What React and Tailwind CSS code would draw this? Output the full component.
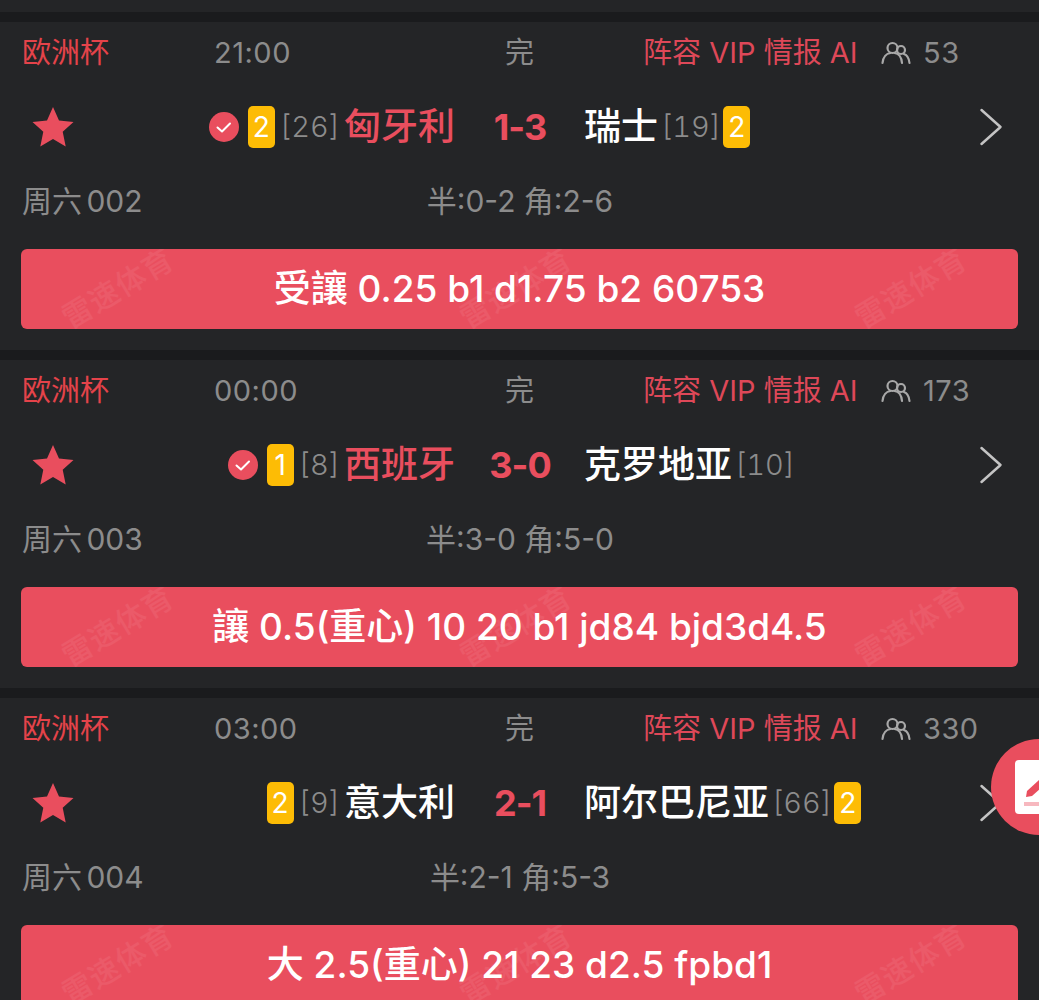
const matches = [
  {
    time: "21:00",
    count: 53,
    code: "周六 002",
    stats: "半:0-2 角:2-6",
    home: "匈牙利",
    homeRank: "[26]",
    homeCards: 2,
    away: "瑞士",
    awayRank: "[19]",
    awayCards: 2,
    score: "1-3",
    checked: true,
    homeRed: true,
    tip: "受讓 0.25 b1 d1.75 b2 60753",
  },
  {
    time: "00:00",
    count: 173,
    code: "周六 003",
    stats: "半:3-0 角:5-0",
    home: "西班牙",
    homeRank: "[8]",
    homeCards: 1,
    away: "克罗地亚",
    awayRank: "[10]",
    score: "3-0",
    checked: true,
    homeRed: true,
    tip: "讓 0.5(重心) 10 20 b1 jd84 bjd3d4.5",
  },
  {
    time: "03:00",
    count: 330,
    code: "周六 004",
    stats: "半:2-1 角:5-3",
    home: "意大利",
    homeRank: "[9]",
    homeCards: 2,
    away: "阿尔巴尼亚",
    awayRank: "[66]",
    awayCards: 2,
    score: "2-1",
    tip: "大 2.5(重心) 21 23 d2.5 fpbd1",
  },
];

function Users() {
  return (
    <svg width="30" height="24" viewBox="0 0 30 24" fill="none" stroke="#a8a8a8" strokeWidth="2.200" strokeLinecap="round">
      <circle cx="11.500" cy="7" r="5" />
      <path d="M1.500 22c.5-6 4-9.500 8-10M13.500 12c4 .5 7 4 7.500 10" />
      <circle cx="20" cy="9" r="4" />
      <path d="M23 13c3 1 5 4.500 5.500 9" />
    </svg>
  );
}

function Star() {
  return (
    <svg width="42" height="40" viewBox="0 0 42 40" fill="#e94e5e">
      <path d="M21 0l6 13.500 14.500 1.500-10.800 9.700 3 14.800L21 32l-12.700 7.500 3-14.800L.5 15 15 13.500z" />
    </svg>
  );
}

function Check() {
  return (
    <svg width="30" height="30" viewBox="0 0 30 30" className="mr-[9px] shrink-0">
      <circle cx="15" cy="15" r="15" fill="#e94e5e" />
      <path d="M8.500 15.500l4.500 4 8-8" fill="none" stroke="#fff" strokeWidth="2" strokeLinecap="round" strokeLinejoin="round" />
    </svg>
  );
}

function Chevron() {
  return (
    <svg width="24" height="38" viewBox="0 0 24 38" fill="none" stroke="#c4c4c4" strokeWidth="2.500" strokeLinecap="round" strokeLinejoin="round">
      <path d="M2.500 2L21.500 19 2.500 36" />
    </svg>
  );
}

function CardBadge({ n }) {
  return (
    <span className="flex h-[42px] w-[27px] shrink-0 items-center justify-center rounded-[5px] bg-[#fdbc05] text-[28px] text-white">
      {n}
    </span>
  );
}

function Watermark({ className }) {
  return (
    <span className={`pointer-events-none absolute -rotate-[31deg] whitespace-nowrap text-[30px] tracking-[1px] text-white/[0.07] ${className}`}>
      雷速体育
    </span>
  );
}

function MatchCard({ m }) {
  return (
    <div className="mb-[10px] bg-[#242527] px-[21px] pb-[21px]">
      {/* top line */}
      <div className="flex h-[60px] items-center pl-px pt-px text-[29px]">
        <span className="w-[192px] text-[#e5434a]">欧洲杯</span>
        <span className="w-[291px] tracking-[0.5px] text-[#8c8c8c]">{m.time}</span>
        <span className="w-[138px] text-[#8c8c8c]">完</span>
        <span className="w-[238px] text-[#de4858]">阵容 VIP 情报 AI</span>
        <Users />
        <span className="ml-[12px] tracking-[0.5px] text-[#8c8c8c]">{m.count}</span>
      </div>

      {/* teams */}
      <div className="-mx-[21px] grid h-[90px] grid-cols-[455px_130px_1fr] items-center">
        <div className="flex items-center justify-between pl-[32px]">
          <Star />
          <div className="flex items-center">
            {m.checked && <Check />}
            <CardBadge n={m.homeCards} />
            <span className="ml-[5px] mr-[4px] text-[29px] font-light tabular-nums text-[#8c8c8c]">{m.homeRank}</span>
            <span className={`text-[37px] font-medium ${m.homeRed ? "text-[#e94e5e]" : "text-white"}`}>{m.home}</span>
          </div>
        </div>
        <div className="text-center text-[36px] font-bold tracking-[-1px] text-[#e94e5e]">{m.score}</div>
        <div className="-ml-px flex items-center justify-between pr-[36px]">
          <div className="flex items-center">
            <span className="text-[37px] font-medium text-white">{m.away}</span>
            <span className="ml-[3px] mr-[2px] text-[29px] font-light tabular-nums text-[#8c8c8c]">{m.awayRank}</span>
            {m.awayCards && <CardBadge n={m.awayCards} />}
          </div>
          <Chevron />
        </div>
      </div>

      {/* half / corners */}
      <div className="grid h-[60px] grid-cols-[1fr_auto_1fr] items-center pb-px pl-px text-[30px] text-[#8c8c8c]">
        <span className="[word-spacing:-4px]">{m.code}</span>
        <span>{m.stats}</span>
        <span />
      </div>

      {/* tip */}
      <div className="relative mt-[17px] flex h-[80px] items-center justify-center overflow-hidden rounded-[6px] bg-[#e94e5e] text-[37px] font-medium text-white">
        <Watermark className="left-[35px] top-[17px]" />
        <Watermark className="left-[433px] top-[17px]" />
        <Watermark className="left-[828px] top-[17px]" />
        <span className="relative">{m.tip}</span>
      </div>
    </div>
  );
}

export default function App() {
  return (
    <div
      className="relative h-[1000px] w-full overflow-hidden bg-[#1a1b1d] pt-[22px]"
      style={{ fontFamily: '"Inter", "Noto Sans CJK SC", sans-serif' }}
    >
      <div className="absolute left-0 top-0 h-[12px] w-full bg-[#242527]" />
      {matches.map((m) => (
        <MatchCard key={m.code} m={m} />
      ))}

      {/* floating edit button */}
      <div className="absolute left-[991px] top-[739px] flex h-[96px] w-[96px] items-center rounded-full bg-[#e94e5e] pl-[24px]">
        <svg width="60" height="54" viewBox="0 0 60 54">
          <rect x="0" y="0" width="60" height="54" rx="4" fill="#fff" />
          <path d="M11 37l1-6 22-20 5 5-22 20z" fill="#e94e5e" />
          <rect x="9" y="42" width="40" height="4" fill="#f7b8bf" />
        </svg>
      </div>
    </div>
  );
}
